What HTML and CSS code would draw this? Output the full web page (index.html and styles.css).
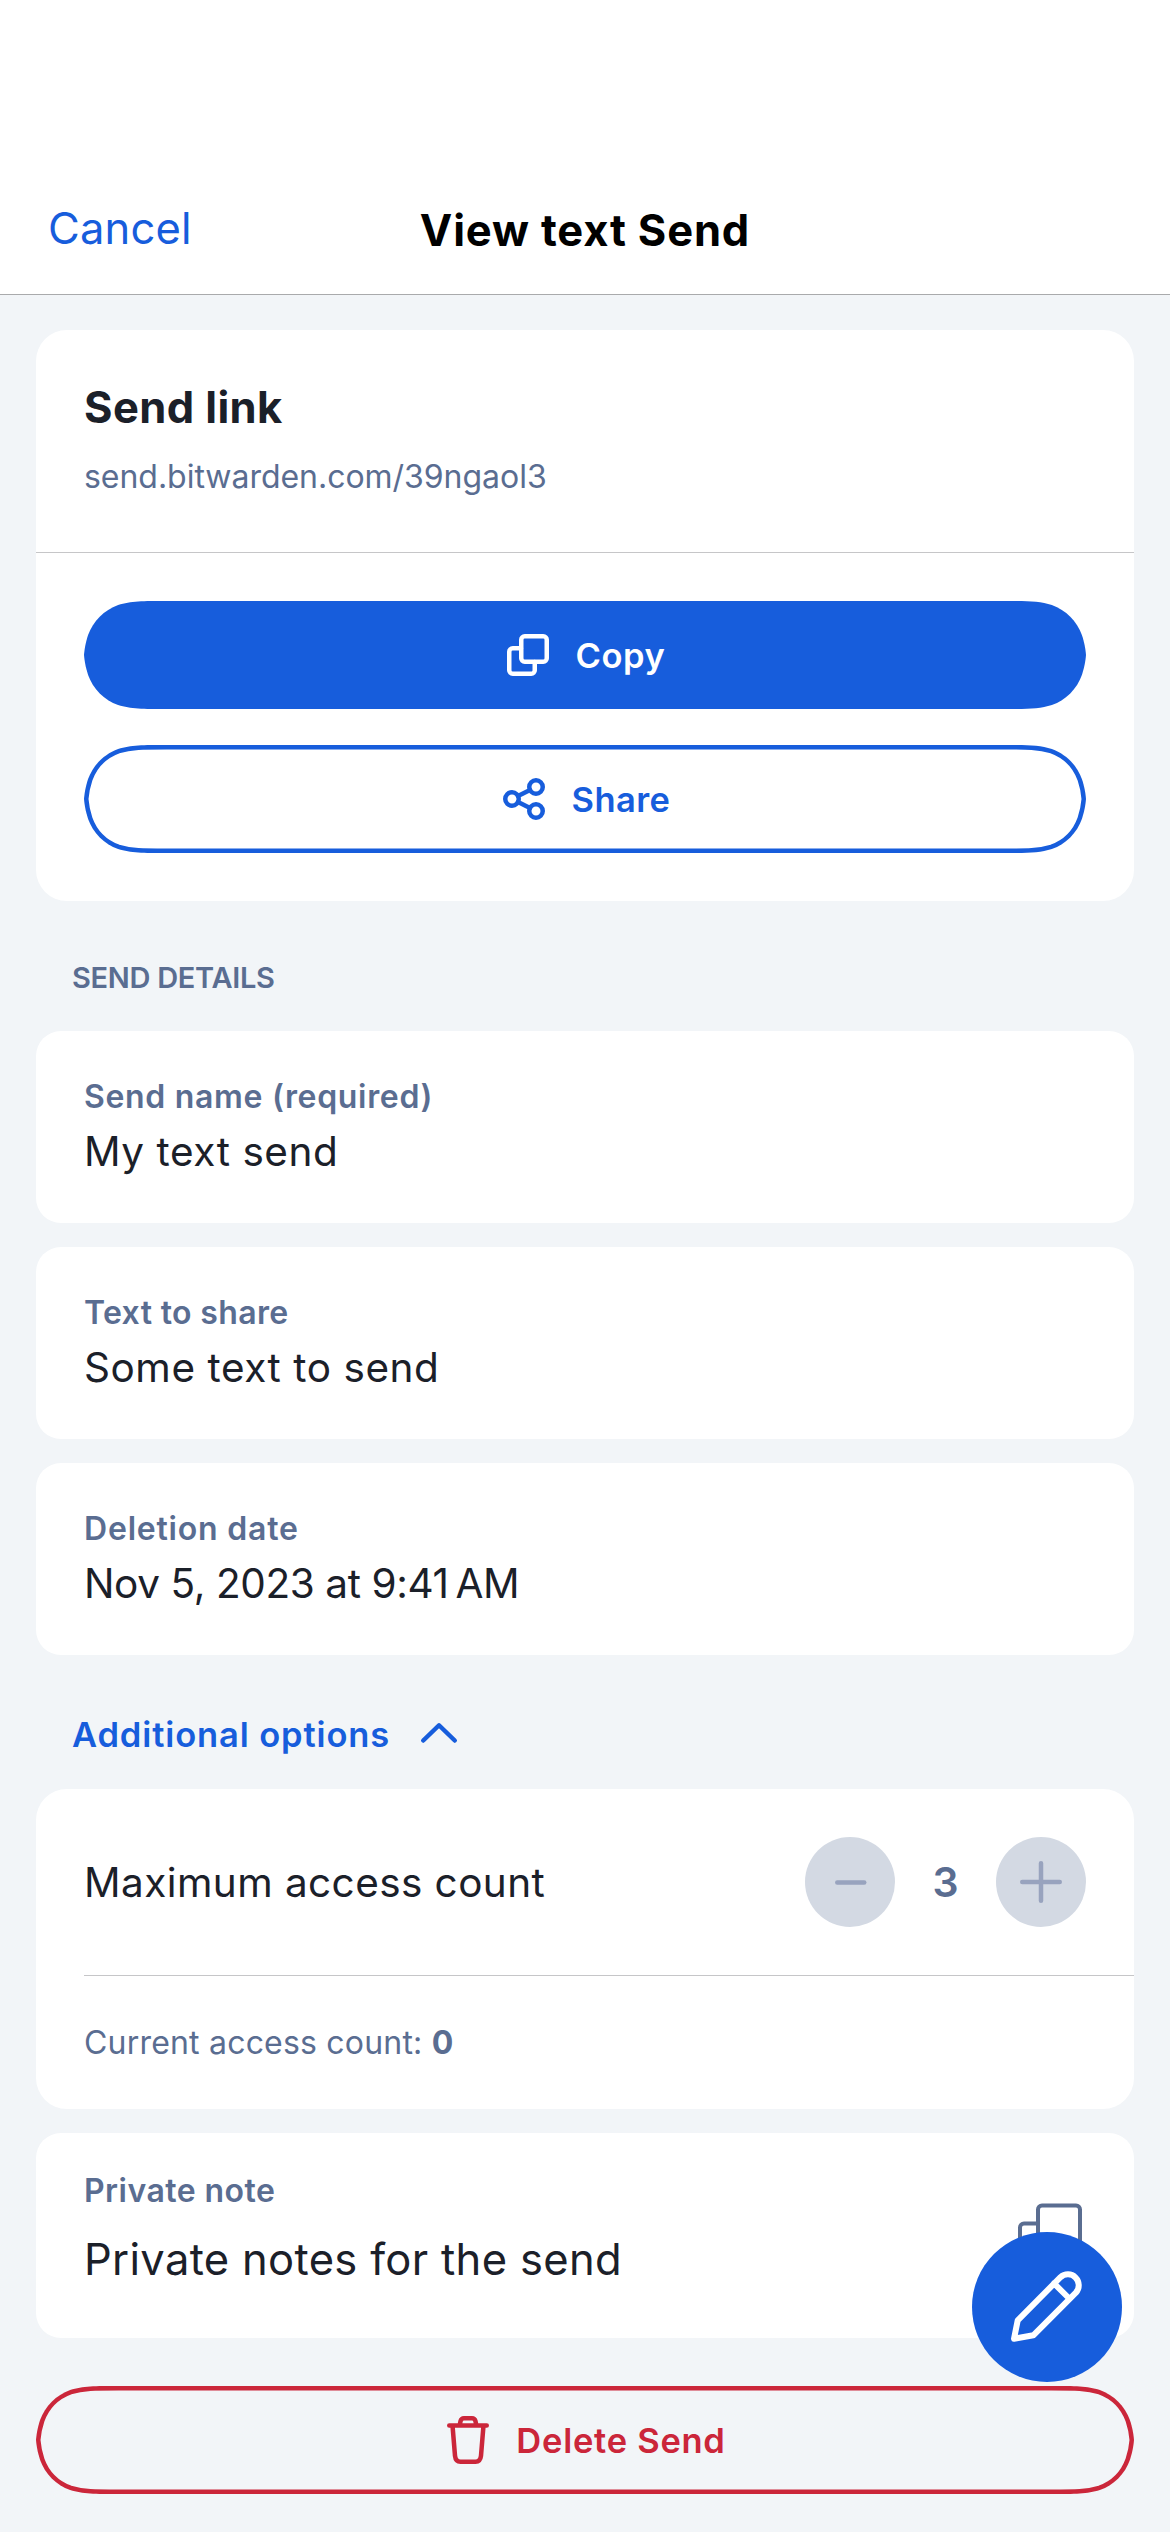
FILE: index.html
```html
<!DOCTYPE html>
<html lang="en">
<head>
<meta charset="utf-8">
<title>View text Send</title>
<link rel="stylesheet" href="styles.css">
</head>
<body>
<header class="nav">
  <a class="nav-cancel">Cancel</a>
  <h1 class="nav-title">View text Send</h1>
</header>

<main class="content">
  <section class="card card-large">
    <div class="link-head">
      <h2 class="link-title">Send link</h2>
      <p class="link-url">send.bitwarden.com/39ngaol3</p>
    </div>
    <hr class="divider">
    <div class="link-actions">
      <button class="btn btn-primary">
        <svg class="btn-shape" viewBox="0 0 1002 108"><path d="M82.5 0H919.5C943.2 0 955.1 0 967.9 4C981.9 9.1 992.9 20.1 997.9 34.1C1000.4 41.5 1001.6 49 1002 54C1001.6 59 1000.4 66.5 997.9 73.9C992.9 87.9 981.9 98.9 967.9 104C955.1 108 943.2 108 919.5 108H82.5C58.8 108 46.9 108 34.1 104C20.1 98.9 9.1 87.9 4.1 73.9C1.6 66.5 .4 59 0 54C.4 49 1.6 41.5 4.1 34.1C9.1 20.1 20.1 9.1 34.1 4C46.9 0 58.8 0 82.5 0Z"/></svg>
        <svg class="icon" viewBox="0 0 48 48"><rect x="17.25" y="5.25" width="25.5" height="25.5" rx="3.5"/><path d="M17 17.25H8.75a3.5 3.5 0 0 0-3.5 3.5V39.25a3.5 3.5 0 0 0 3.5 3.5H27.25a3.5 3.5 0 0 0 3.5-3.5V31"/></svg>
        <span class="t-copy">Copy</span>
      </button>
      <button class="btn btn-outline">
        <svg class="btn-shape" viewBox="0 0 1002 108"><clipPath id="share-clip"><path id="share-shape" d="M82.5 0H919.5C943.2 0 955.1 0 967.9 4C981.9 9.1 992.9 20.1 997.9 34.1C1000.4 41.5 1001.6 49 1002 54C1001.6 59 1000.4 66.5 997.9 73.9C992.9 87.9 981.9 98.9 967.9 104C955.1 108 943.2 108 919.5 108H82.5C58.8 108 46.9 108 34.1 104C20.1 98.9 9.1 87.9 4.1 73.9C1.6 66.5 .4 59 0 54C.4 49 1.6 41.5 4.1 34.1C9.1 20.1 20.1 9.1 34.1 4C46.9 0 58.8 0 82.5 0Z"/></clipPath><use href="#share-shape" clip-path="url(#share-clip)"/></svg>
        <svg class="icon" viewBox="0 0 48 48"><circle cx="36" cy="12" r="6.75"/><circle cx="12" cy="24" r="6.75"/><circle cx="36" cy="36" r="6.75"/><path d="M18 21L30 15M18 27L30 33"/></svg>
        <span class="t-share">Share</span>
      </button>
    </div>
  </section>

  <h3 class="section-label">SEND DETAILS</h3>

  <div class="field-list">
    <section class="card field">
      <h4 class="field-label t-name">Send name (required)</h4>
      <p class="field-value">My text send</p>
    </section>
    <section class="card field">
      <h4 class="field-label t-text">Text to share</h4>
      <p class="field-value">Some text to send</p>
    </section>
    <section class="card field">
      <h4 class="field-label t-date">Deletion date</h4>
      <p class="field-value t-datetime">Nov 5, 2023 at 9:41&#8201;AM</p>
    </section>
  </div>

  <div class="disclosure">
    <span>Additional options</span>
    <svg class="chevron" viewBox="0 0 40 24"><path d="M4.25 19.5L20 4.25L35.75 19.5"/></svg>
  </div>

  <section class="card card-large">
    <div class="stepper-row">
      <span class="stepper-label">Maximum access count</span>
      <div class="stepper">
        <svg class="step-btn" viewBox="0 0 90 90"><circle cx="45" cy="45" r="45"/><path d="M32.25 45.5H59.25"/></svg>
        <span class="step-value">3</span>
        <svg class="step-btn" viewBox="0 0 90 90"><circle cx="45" cy="45" r="45"/><path d="M26.25 45H63.75M45 26.25V63.75"/></svg>
      </div>
    </div>
    <hr class="divider divider-inset">
    <p class="access-count">Current access count: <b>0</b></p>
  </section>

  <section class="card note">
    <div class="note-text">
      <h4 class="field-label t-note">Private note</h4>
      <p class="note-value">Private notes for the send</p>
    </div>
    <svg class="note-copy" viewBox="0 0 72 72"><rect x="24" y="5.5" width="42" height="42" rx="4"/><path d="M24 23.5H10a4 4 0 0 0-4 4V62a4 4 0 0 0 4 4H44a4 4 0 0 0 4-4V48"/></svg>
  </section>

  <button class="btn btn-danger">
    <svg class="btn-shape" viewBox="0 0 1098 108"><clipPath id="delete-clip"><path id="delete-shape" d="M82.5 0H1015.5C1039.2 0 1051.1 0 1063.9 4C1077.9 9.1 1088.9 20.1 1093.9 34.1C1096.4 41.5 1097.6 49 1098 54C1097.6 59 1096.4 66.5 1093.9 73.9C1088.9 87.9 1077.9 98.9 1063.9 104C1051.1 108 1039.2 108 1015.5 108H82.5C58.8 108 46.9 108 34.1 104C20.1 98.9 9.1 87.9 4.1 73.9C1.6 66.5 .4 59 0 54C.4 49 1.6 41.5 4.1 34.1C9.1 20.1 20.1 9.1 34.1 4C46.9 0 58.8 0 82.5 0Z"/></clipPath><use href="#delete-shape" clip-path="url(#delete-clip)"/></svg>
    <svg class="icon" viewBox="0 0 48 48"><path d="M5.25 9.5H42.75M15.6 9.5L16.5 5.2Q17.3 2.25 20 2.25H28Q30.7 2.25 31.5 5.2L32.4 9.5M8.5 9.5L11 39.8Q11.6 45.75 16.5 45.75H31.5Q36.4 45.75 37 39.8L39.5 9.5"/></svg>
    <span class="t-delete">Delete Send</span>
  </button>
</main>

<button class="fab">
  <svg viewBox="0 0 150 150"><path d="M42 106.8L45.7 88.3L88.5 45.2A10.9 10.9 0 0 1 103.9 60.6L61.3 103.3ZM82 51.3L96.7 66"/></svg>
</button>
</body>
</html>
```
FILE: styles.css
```css
* { box-sizing: border-box; margin: 0; padding: 0; }

body {
  width: 1170px;
  height: 2532px;
  overflow: hidden;
  background: #f2f5f8;
  color: #1b2029;
  font-family: Inter, "Liberation Sans", sans-serif;
  font-size: 32px;
}

svg { fill: none; stroke: currentColor; stroke-linecap: round; stroke-linejoin: round; }
button { border: 0; background: none; font: inherit; }

/* Navigation bar */
.nav {
  display: grid;
  grid-template-columns: 1fr auto 1fr;
  height: 295px;
  padding: 200px 48px 0;
  background: #fff;
  border-bottom: 1px solid #a9aaac;
  line-height: 60px;
}
.nav-cancel { color: #175ddc; font-size: 43.5px; letter-spacing: .2px; line-height: 56px; }
.nav-title { color: #000; font-size: 43.5px; font-weight: 700; letter-spacing: .85px; white-space: nowrap; }

/* Cards */
.content { padding: 35px 36px 0; }
.card { background: #fff; border-radius: 25px; }
.card-large { border-radius: 31px; }
.divider { height: 1px; border: 0; background: #c6c6c8; }
.divider-inset { margin-left: 48px; }

.link-head { height: 222px; padding: 50px 48px 0; }
.link-title { font-size: 43.5px; font-weight: 700; line-height: 54px; letter-spacing: .4px; }
.link-url { margin-top: 22px; color: #5a6d91; line-height: 42px; letter-spacing: -.03px; }
.link-actions { display: grid; gap: 36px; padding: 48px; }

/* Buttons */
.btn {
  position: relative;
  display: flex;
  align-items: center;
  justify-content: center;
  gap: 24px;
  width: 100%;
  height: 108px;
  font-size: 34.5px;
  font-weight: 600;
}
.btn-shape { position: absolute; inset: 0; width: 100%; height: 100%; stroke-width: 9; }
.icon { position: relative; width: 48px; height: 48px; stroke-width: 4.5; }
.btn span { position: relative; }
.btn-primary { color: #fff; padding-right: 1px; }
.btn-primary .btn-shape { fill: #175ddc; stroke: none; }
.btn-outline { color: #175ddc; }
.btn-danger { margin-top: 48px; color: #cb263a; }
.t-copy { letter-spacing: .56px; }
.t-share { letter-spacing: .42px; }
.t-delete { letter-spacing: .74px; }

/* Send details */
.section-label {
  display: flex;
  align-items: center;
  height: 130px;
  padding: 23px 0 0 36px;
  color: #5a6d91;
  font-size: 29px;
  font-weight: 600;
  letter-spacing: -.3px;
}
.field-list { display: grid; gap: 24px; }
.field { height: 192px; padding: 46px 48px 0; }
.field-label { color: #5a6d91; font-size: 32px; font-weight: 600; line-height: 40px; }
.field-value { margin-top: 10px; font-size: 40.5px; line-height: 50px; letter-spacing: .55px; }
.t-name { letter-spacing: .68px; }
.t-text { letter-spacing: .36px; }
.t-date { letter-spacing: .8px; }
.t-datetime { letter-spacing: -.4px; }
.t-note { letter-spacing: .46px; }

/* Additional options */
.disclosure {
  display: flex;
  align-items: center;
  gap: 29px;
  height: 134px;
  padding: 24px 0 0 36px;
  color: #175ddc;
  font-size: 34.5px;
  font-weight: 600;
  letter-spacing: .88px;
}
.chevron { width: 40px; height: 24px; margin-top: -2px; stroke-width: 4.5; }

.stepper-row { display: flex; align-items: center; justify-content: space-between; height: 186px; padding: 0 48px; }
.stepper-label { font-size: 40.5px; letter-spacing: .42px; }
.stepper { display: flex; align-items: center; }
.step-btn { width: 90px; height: 90px; color: #98a3be; stroke-width: 4.5; }
.step-btn circle { fill: #d3d9e3; stroke: none; }
.step-value { width: 101px; color: #5a6d91; font-size: 41px; font-weight: 600; text-align: center; }
.access-count { height: 133px; padding-left: 48px; color: #5a6d91; line-height: 133px; letter-spacing: .2px; }

/* Private note */
.card + .note { margin-top: 24px; }
.note { display: flex; align-items: center; justify-content: space-between; height: 205px; padding: 0 48px; }
.note-text { align-self: flex-start; padding-top: 38px; }
.note-value { margin-top: 21px; font-size: 43.5px; line-height: 54px; letter-spacing: .33px; }
.note-copy { width: 72px; height: 72px; color: #5a6d91; stroke-width: 4; }

/* Floating edit button */
.fab {
  position: fixed;
  right: 48px;
  bottom: 150px;
  width: 150px;
  height: 150px;
  border-radius: 50%;
  background: #175ddc;
  color: #fff;
}
.fab svg { display: block; width: 150px; height: 150px; stroke-width: 6; }
```
